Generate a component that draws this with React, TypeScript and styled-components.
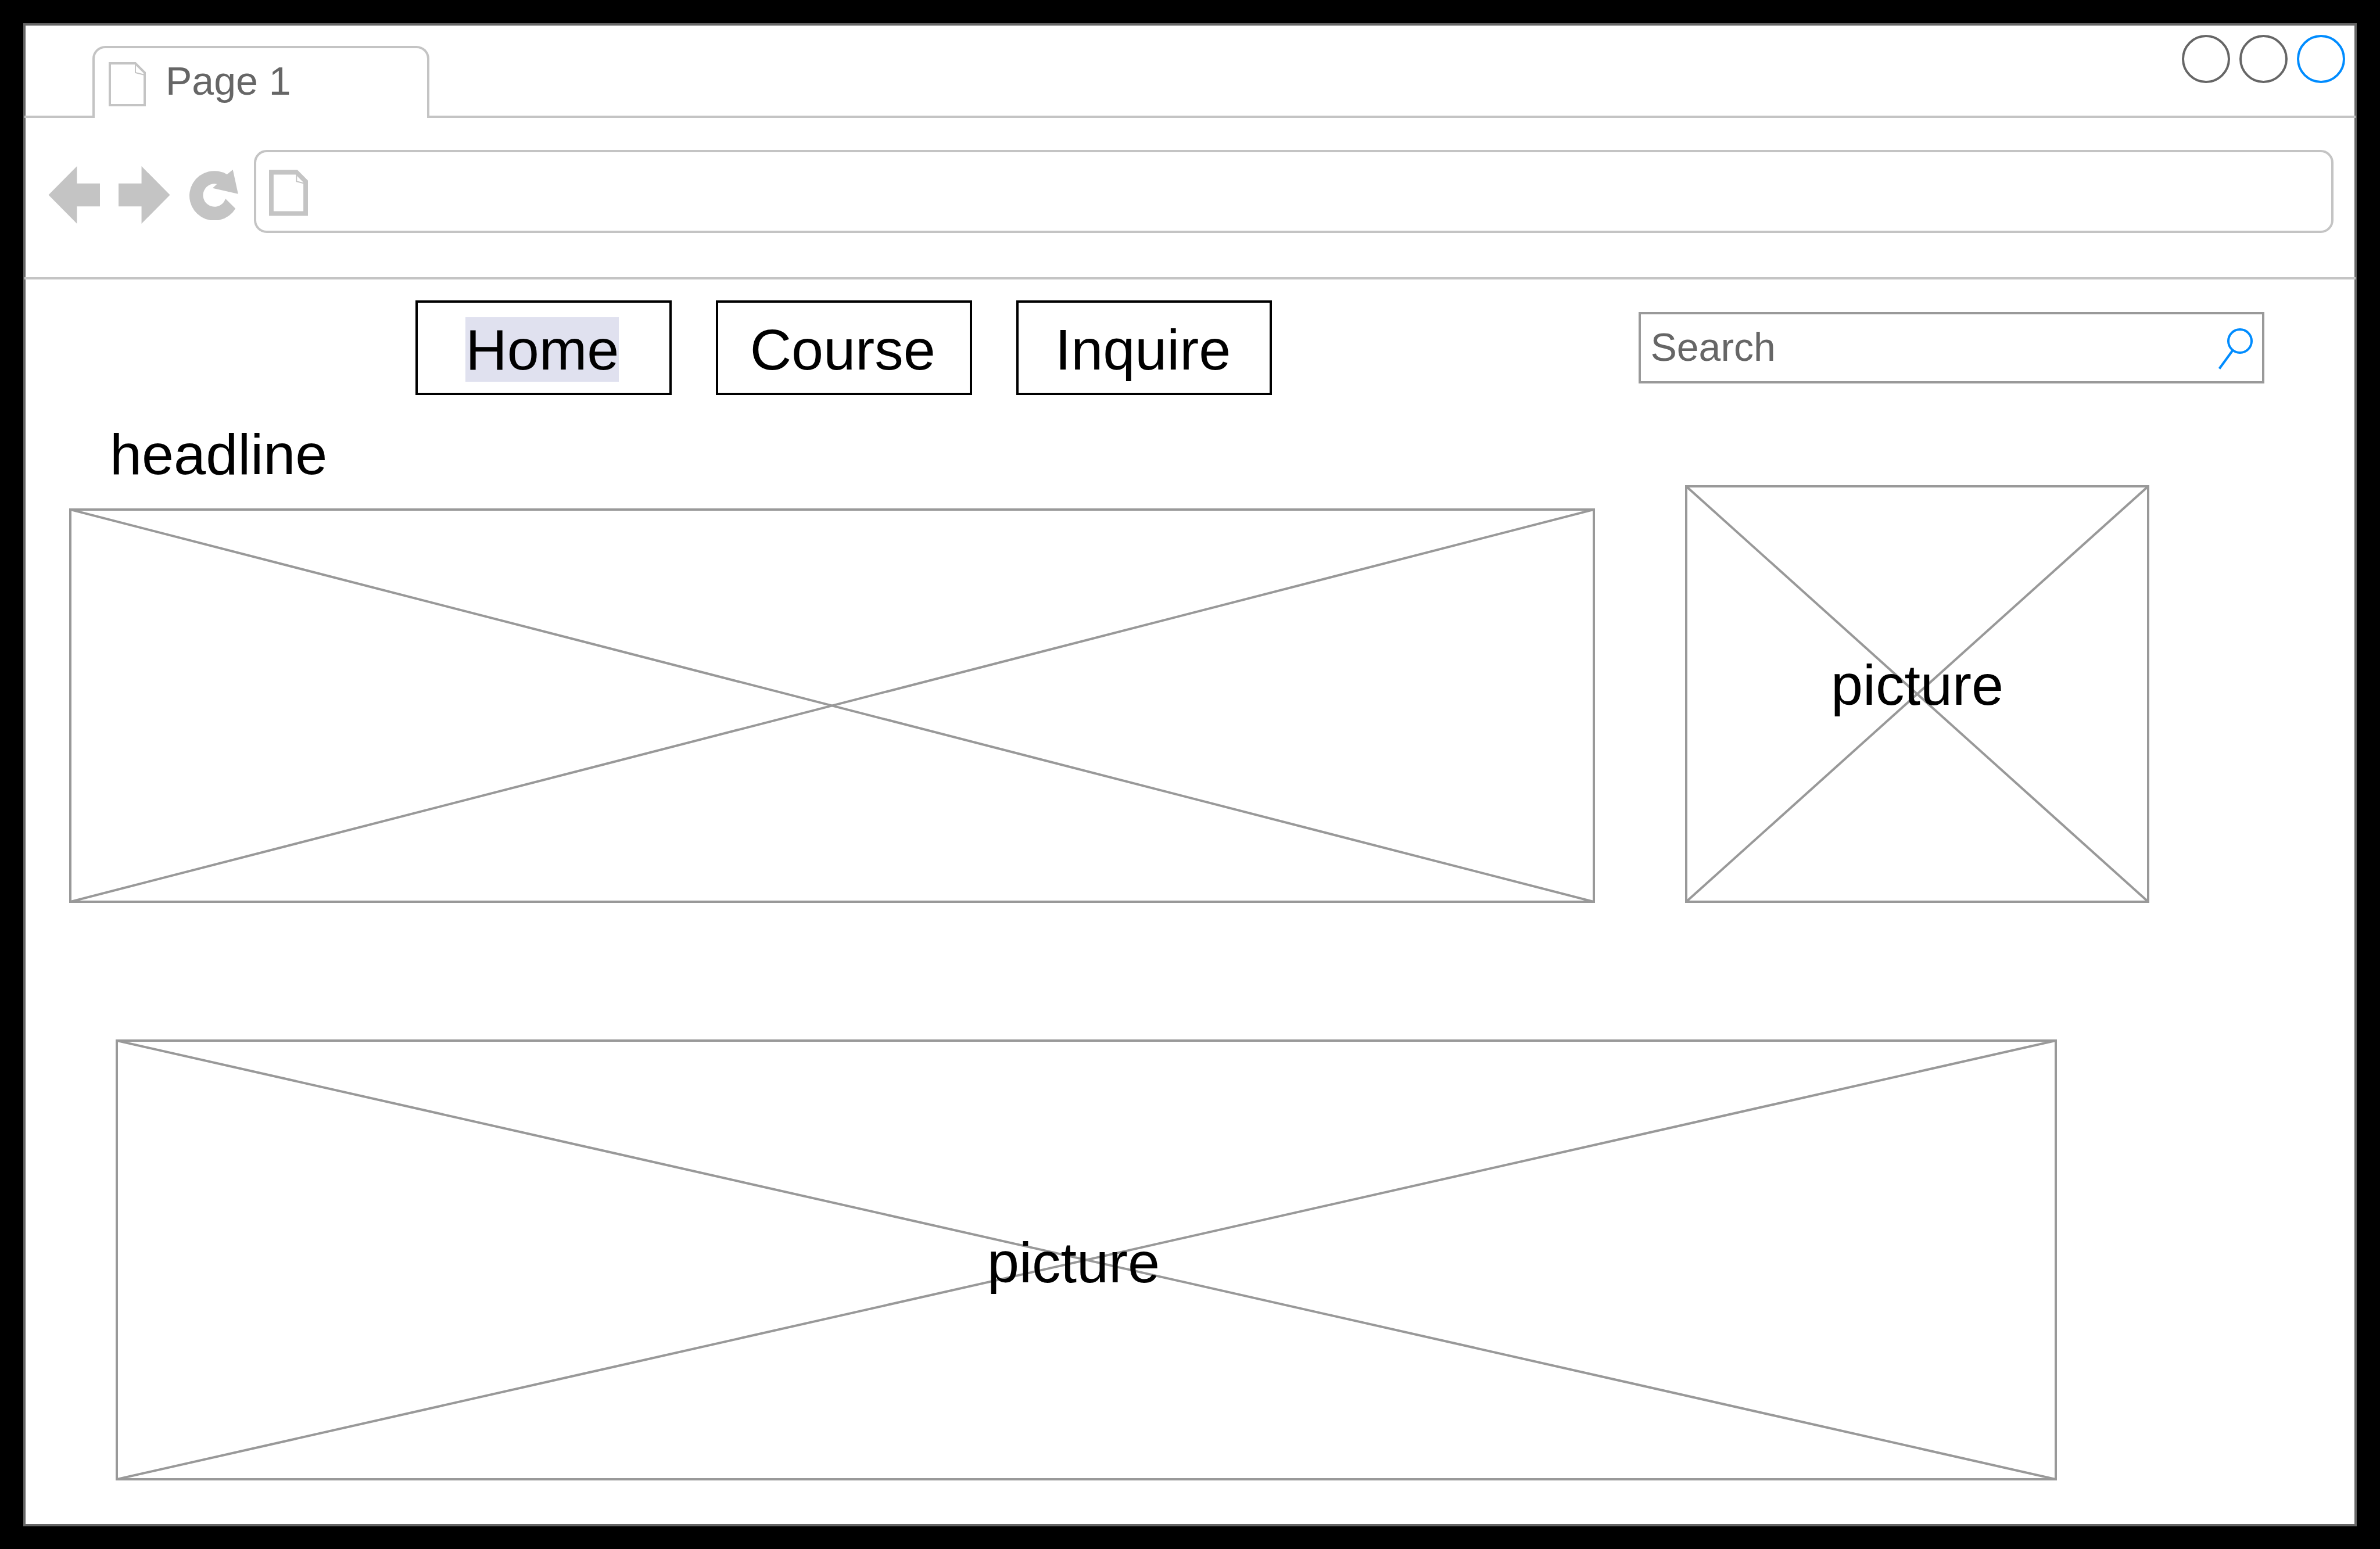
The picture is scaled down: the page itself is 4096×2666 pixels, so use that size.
import React from "react";
import styled, { createGlobalStyle } from "styled-components";

const color = {
  frame: "#666666",
  chrome: "#c4c4c4",
  placeholder: "#999999",
  accent: "#008cff",
  highlight: "#e0e1ef",
};

const GlobalStyle = createGlobalStyle`
  *, *::before, *::after { box-sizing: border-box; }
  body {
    margin: 0;
    background: #000;
    color: #000;
    font-family: "Liberation Sans", Arial, Helvetica, sans-serif;
  }
  button, input { font: inherit; color: inherit; }
  svg { display: block; }
`;

const Desktop = styled.div`
  padding: 40px;
`;

const BrowserWindow = styled.div`
  border: 4px solid ${color.frame};
  background: #fff;
`;

const TabStrip = styled.header`
  display: flex;
  align-items: flex-start;
  justify-content: space-between;
  margin: 0 -2px;
  padding: 0 18px 0 117px;
  border-bottom: 4px solid ${color.chrome};
`;

const Tab = styled.button`
  display: flex;
  align-items: center;
  gap: 34px;
  width: 580px;
  height: 124px;
  margin: 35px 0 -4px;
  padding: 0 24px;
  border: 4px solid ${color.chrome};
  border-bottom: 0;
  border-radius: 22px 22px 0 0;
  background: #fff;
  color: ${color.frame};
  font-size: 68px;
  line-height: 76px;

  svg { margin-top: 4px; }
`;

const TabTitle = styled.span`
  margin-bottom: 8px;
`;

const WindowControls = styled.div`
  display: flex;
  gap: 16px;
  padding-top: 16px;
`;

const WindowButton = styled.button<{ $tone: string }>`
  width: 83px;
  height: 83px;
  padding: 0;
  border: 4px solid ${(p) => p.$tone};
  border-radius: 50%;
  background: #fff;
`;

const Toolbar = styled.div`
  display: flex;
  align-items: center;
  gap: 27px;
  margin: 0 -2px;
  padding: 55px 38px 76px 41px;
  border-bottom: 4px solid ${color.chrome};
`;

const HistoryControls = styled.div`
  display: flex;
  align-items: center;
  gap: 32px;
  padding-top: 12px;
`;

const IconButton = styled.button`
  padding: 0;
  border: 0;
  background: none;
  color: ${color.chrome};
`;

const AddressBar = styled.label`
  display: flex;
  flex: 1;
  align-items: center;
  gap: 24px;
  height: 143px;
  padding: 4px 22px 0;
  border: 4px solid ${color.chrome};
  border-radius: 22px;
`;

const TextInput = styled.input`
  flex: 1;
  min-width: 0;
  padding: 0;
  border: 0;
  outline: 0;
  background: none;
  color: ${color.frame};
  font-size: 68px;
  line-height: 76px;

  &::placeholder {
    color: ${color.frame};
    opacity: 1;
  }
`;

const Page = styled.main`
  padding: 36px 0 75px;
`;

const MenuRow = styled.div`
  display: grid;
  grid-template-columns: 1475fr 1077fr;
  align-items: center;
  column-gap: 631px;
  padding: 0 155px 0 671px;
`;

const Menu = styled.nav`
  display: grid;
  grid-template-columns: repeat(3, 1fr);
  gap: 76px;
`;

const MenuButton = styled.button`
  height: 163px;
  padding: 6px 4px 0 0;
  border: 4px solid #000;
  background: #fff;
  font-size: 99px;
  line-height: 111px;
`;

const Selected = styled.span`
  background: ${color.highlight};
`;

const SearchBox = styled.label`
  display: flex;
  align-items: center;
  height: 123px;
  padding: 0 16px;
  border: 4px solid ${color.placeholder};

  svg { margin-top: 4px; }
  input { margin-bottom: 4px; }
`;

const FeatureRow = styled.section`
  display: grid;
  grid-template-columns: 2626fr 799fr;
  align-items: end;
  column-gap: 155px;
  margin-top: 46px;
  padding: 0 353px 0 75px;
`;

const Headline = styled.h1`
  margin: 0 0 38px;
  padding-left: 70px;
  font-size: 99px;
  font-weight: 400;
  line-height: 111px;
`;

const BannerRow = styled.section`
  margin-top: 235px;
  padding: 0 512px 0 155px;
`;

const Frame = styled.figure<{ $ratio: string; $inset?: string }>`
  position: relative;
  display: flex;
  align-items: center;
  justify-content: center;
  aspect-ratio: ${(p) => p.$ratio};
  margin: 0;
  padding: ${(p) => p.$inset ?? "0"};
  border: 4px solid ${color.placeholder};
`;

const Cross = styled.svg`
  position: absolute;
  top: -2px;
  left: -2px;
  width: calc(100% + 4px);
  height: calc(100% + 4px);
  stroke: ${color.placeholder};
  stroke-width: 4px;

  line { vector-effect: non-scaling-stroke; }
`;

const Caption = styled.figcaption`
  position: relative;
  font-size: 99px;
  line-height: 111px;
`;

function Placeholder({ ratio, inset, caption }: { ratio: string; inset?: string; caption?: string }) {
  return (
    <Frame $ratio={ratio} $inset={inset}>
      <Cross viewBox="0 0 100 100" preserveAspectRatio="none" aria-hidden="true">
        <line x1="0" y1="0" x2="100" y2="100" />
        <line x1="100" y1="0" x2="0" y2="100" />
      </Cross>
      {caption && <Caption>{caption}</Caption>}
    </Frame>
  );
}

const TabPageIcon = () => (
  <svg width="64" height="76" viewBox="0 0 64 76" fill="none" stroke={color.chrome} aria-hidden="true">
    <path d="M2 2H46L62 18V74H2Z" strokeWidth="4" />
    <path d="M46 2V18L62 22" strokeWidth="2" />
  </svg>
);

const AddressPageIcon = () => (
  <svg width="67" height="80" viewBox="0 0 68 80" fill="none" stroke={color.chrome} aria-hidden="true">
    <path d="M4 4H48L64 20V76H4Z" strokeWidth="8" />
    <path d="M48 4V20L64 24" strokeWidth="2" />
  </svg>
);

const BackIcon = () => (
  <svg width="89" height="99" viewBox="0 0 90 100" fill="currentColor" aria-hidden="true">
    <path d="M0.5 50L50 0V30H90V70H50V100Z" />
  </svg>
);

const ForwardIcon = () => (
  <svg width="89" height="99" viewBox="0 0 90 100" fill="currentColor" aria-hidden="true">
    <path d="M89.5 50L40 0V30H0V70H40V100Z" />
  </svg>
);

const ReloadIcon = () => (
  <svg width="85" height="87" viewBox="0 0 86 88" fill="currentColor" aria-hidden="true">
    <path d="M66.4 8.3L76.6 0L85.8 42.3L41.4 32L49 25A20 20 0 1 0 63.8 50.7L81.2 67.7A43.2 43.2 0 1 1 66.4 8.3Z" />
  </svg>
);

const SearchIcon = () => (
  <svg width="60" height="72" viewBox="0 0 60 72" fill="none" stroke={color.accent} strokeWidth="4" aria-hidden="true">
    <circle cx="38" cy="22" r="20" />
    <path d="M25.5 38L2.5 69.5" />
  </svg>
);

export default function App() {
  return (
    <>
      <GlobalStyle />
      <Desktop>
        <BrowserWindow>
          <TabStrip>
            <Tab type="button">
              <TabPageIcon />
              <TabTitle>Page 1</TabTitle>
            </Tab>
            <WindowControls>
              <WindowButton type="button" $tone={color.frame} aria-label="Minimize" />
              <WindowButton type="button" $tone={color.frame} aria-label="Maximize" />
              <WindowButton type="button" $tone={color.accent} aria-label="Close" />
            </WindowControls>
          </TabStrip>
          <Toolbar>
            <HistoryControls>
              <IconButton type="button" aria-label="Back"><BackIcon /></IconButton>
              <IconButton type="button" aria-label="Forward"><ForwardIcon /></IconButton>
              <IconButton type="button" aria-label="Reload"><ReloadIcon /></IconButton>
            </HistoryControls>
            <AddressBar>
              <AddressPageIcon />
              <TextInput type="text" aria-label="Address" />
            </AddressBar>
          </Toolbar>
          <Page>
            <MenuRow>
              <Menu>
                <MenuButton type="button"><Selected>Home</Selected></MenuButton>
                <MenuButton type="button">Course</MenuButton>
                <MenuButton type="button">Inquire</MenuButton>
              </Menu>
              <SearchBox>
                <TextInput type="text" placeholder="Search" aria-label="Search" />
                <SearchIcon />
              </SearchBox>
            </MenuRow>
            <FeatureRow>
              <div>
                <Headline>headline</Headline>
                <Placeholder ratio="2626 / 679" />
              </div>
              <Placeholder ratio="799 / 719" inset="0 0 32px" caption="picture" />
            </FeatureRow>
            <BannerRow>
              <Placeholder ratio="3341 / 759" inset="8px 44px 0 0" caption="picture" />
            </BannerRow>
          </Page>
        </BrowserWindow>
      </Desktop>
    </>
  );
}
